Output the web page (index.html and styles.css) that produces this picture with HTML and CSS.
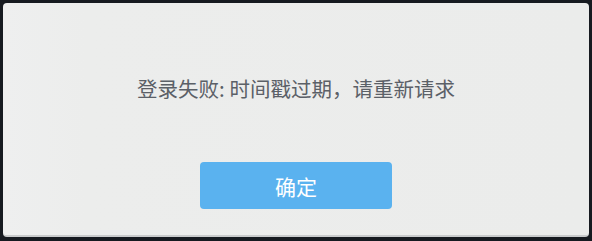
FILE: index.html
```html
<!DOCTYPE html>
<html lang="zh">
<head>
<meta charset="utf-8">
<link rel="stylesheet" href="styles.css">
</head>
<body>
<div class="dialog">
  <p class="message">登录失败: 时间戳过期，请重新请求</p>
  <button class="ok">确定</button>
</div>
</body>
</html>
```
FILE: styles.css
```css
html, body {
  margin: 0;
  padding: 0;
  background: #161a20;
  width: 592px;
  height: 241px;
  overflow: hidden;
}
body {
  padding: 3px 3px 0 3px;
  box-sizing: border-box;
  font-family: "Noto Sans CJK SC", "Noto Sans", sans-serif;
}
.dialog {
  width: 586px;
  height: 234px;
  box-sizing: border-box;
  background: linear-gradient(90deg, #eeefef 0%, #ecedec 14%, #ebeceb 100%);
  border-radius: 4px;
  border-bottom: 2px solid #c9cbcc;
  display: flex;
  flex-direction: column;
  align-items: center;
}
.message {
  margin: 70px 0 0 0;
  font-size: 20.5px;
  line-height: 30px;
  color: #5b6067;
  letter-spacing: 0;
}
.ok {
  margin-top: 59px;
  width: 192px;
  height: 47px;
  border: none;
  border-radius: 4px;
  background: #5ab2ef;
  color: #ffffff;
  font-family: "Noto Sans CJK SC", "Noto Sans", sans-serif;
  font-size: 21px;
  padding: 0;
}
```
